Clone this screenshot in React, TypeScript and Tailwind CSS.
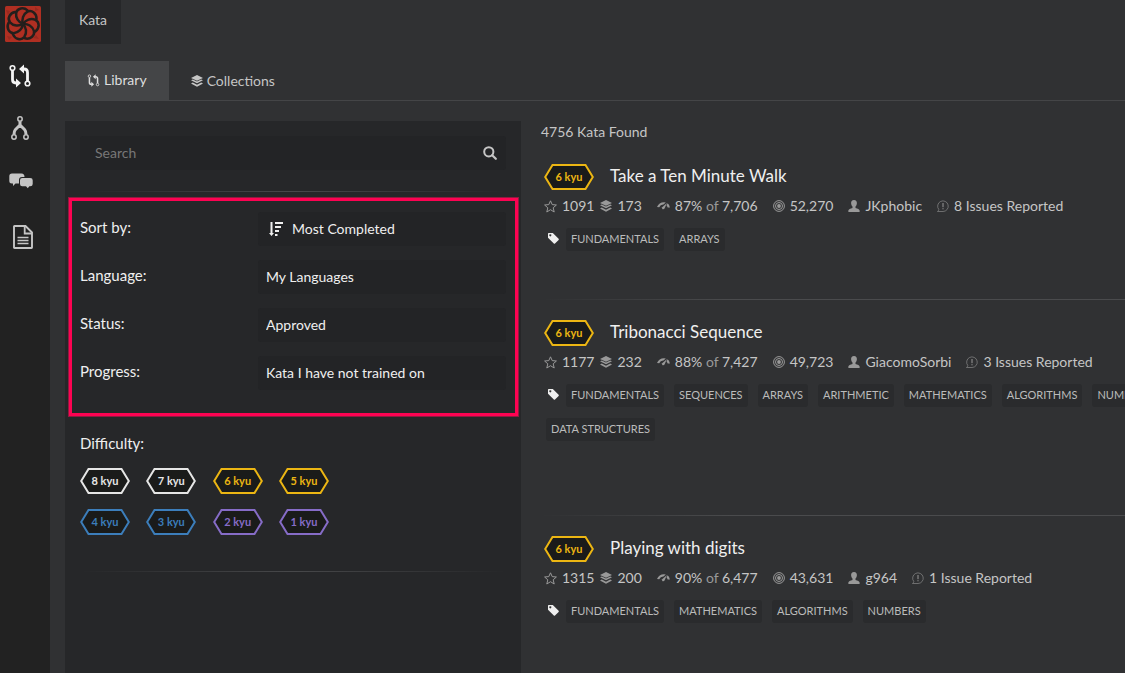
import type { ReactNode } from "react";

type IconProps = { className?: string };

function SpiralLogo() {
  const turn = 360 / 7;
  return (
    <svg viewBox="0 0 36 36" className="h-9 w-9" aria-hidden="true">
      <rect width="36" height="36" rx="1.500" fill="#b02f22" />
      <path d="M1 4l4 1-2 4zM30 1l4 3-4 1zM2 30l5 1-3 3zM31 29l3 4-6-1z" fill="#982a20" />
      <g fill="none" stroke="#241f1c" strokeWidth="2.500" strokeLinecap="round">
        {[0, 1, 2, 3, 4, 5, 6].map((n) => (
          <path
            key={n}
            d="M18 18C16.500 13.500 18 8.200 22.500 5.700C26.800 3.700 31.800 7.500 31.500 13"
            transform={`rotate(${n * turn} 18 18)`}
          />
        ))}
      </g>
    </svg>
  );
}

function TrainIcon({ className }: IconProps) {
  return (
    <svg viewBox="0 0 22 24" className={className} fill="none" stroke="currentColor" aria-hidden="true">
      <circle cx="3.500" cy="4" r="2.300" strokeWidth="1.600" />
      <circle cx="18.500" cy="19.500" r="2.300" strokeWidth="1.600" />
      <path d="M3.500 6.500V15.500Q3.500 19 7 19H8M18.500 17V8.500Q18.500 5 15 5H14" strokeWidth="2.800" />
      <path d="M7 14.500L12 19L7 23.500ZM15 0.500L10 5L15 9.500Z" fill="currentColor" stroke="none" />
    </svg>
  );
}

function ForkIcon({ className }: IconProps) {
  return (
    <svg viewBox="0 0 18 24" className={className} fill="none" stroke="currentColor" aria-hidden="true">
      <path d="M9 5.500V9.500M9 9L4.300 13.800Q3.200 15 3 18.500M9 9L13.700 13.800Q14.800 15 15 18.500" strokeWidth="3" />
      <circle cx="9" cy="3" r="2.200" strokeWidth="1.500" />
      <circle cx="3" cy="21" r="2.200" strokeWidth="1.500" />
      <circle cx="15" cy="21" r="2.200" strokeWidth="1.500" />
    </svg>
  );
}

function ChatIcon({ className }: IconProps) {
  return (
    <svg viewBox="0 0 24 16" className={className} fill="currentColor" aria-hidden="true">
      <path d="M3 0.500H12.500Q15.500 0.500 15.500 4H13Q10 4 10 7V10.500H6.500L4 13V10.500H3Q0.300 10.500 0.300 8V3.300Q0.300 0.500 3 0.500Z" />
      <path d="M13.200 5H21.200Q23.700 5 23.700 7.200V11Q23.700 13.300 21.200 13.300H20.300L18.800 15.300L17 13.300H13.200Q11 13.300 11 11V7.200Q11 5 13.200 5Z" />
    </svg>
  );
}

function DocIcon({ className }: IconProps) {
  return (
    <svg viewBox="0 0 20 24" className={className} fill="none" stroke="currentColor" aria-hidden="true">
      <path d="M1 1.500Q1 1 1.500 1H12.500L19 7.500V22.500Q19 23 18.500 23H1.500Q1 23 1 22.500Z" strokeWidth="1.900" />
      <path d="M11.700 1V8.500H19" strokeWidth="1.800" />
      <path d="M4.500 12.500H15.500M4.500 15.500H15.500M4.500 18.500H15.500" strokeWidth="1.300" />
    </svg>
  );
}

function LayersIcon({ className }: IconProps) {
  return (
    <svg viewBox="0 0 12 12" className={className} fill="currentColor" aria-hidden="true">
      <path d="M6 0L12 2.900L6 5.800L0 2.900Z" />
      <path d="M0 5.200L1.800 4.400L6 6.500L10.200 4.400L12 5.200L6 8.300Z" />
      <path d="M0 8.400L1.800 7.500L6 9.700L10.200 7.500L12 8.400L6 11.700Z" />
    </svg>
  );
}

function StarIcon({ className }: IconProps) {
  return (
    <svg viewBox="0 0 13 13" className={className} fill="none" stroke="currentColor" aria-hidden="true">
      <path d="M6.500 0.800L8.200 4.600L12.400 5L9.200 7.800L10.200 12L6.500 9.700L2.800 12L3.800 7.800L0.600 5L4.800 4.600Z" strokeLinejoin="round" />
    </svg>
  );
}

function GaugeIcon({ className }: IconProps) {
  return (
    <svg viewBox="0 0 13 12" className={className} fill="currentColor" aria-hidden="true">
      <path d="M0 7Q2 2.200 7 2.200Q8 2.200 8.800 2.500L6.500 4.400Q3.500 4.200 2.200 7.300Z" />
      <path d="M10 3L5.200 7.200Q4.600 8.400 5.600 9.200Q6.900 9.600 7.500 8.500Z" />
      <path d="M10.600 3.300Q12.400 4.700 12.900 7.400L10.700 7.600Q10.400 6.300 9.500 5.500Z" />
    </svg>
  );
}

function TargetIcon({ className }: IconProps) {
  return (
    <svg viewBox="0 0 12 12" className={className} fill="none" stroke="currentColor" aria-hidden="true">
      <circle cx="6" cy="6" r="5.400" strokeWidth="1" />
      <circle cx="6" cy="6" r="3.500" strokeWidth="1" />
      <circle cx="6" cy="6" r="1.900" fill="currentColor" stroke="none" />
    </svg>
  );
}

function PersonIcon({ className }: IconProps) {
  return (
    <svg viewBox="0 0 12 12" className={className} fill="currentColor" aria-hidden="true">
      <path d="M6 0C8.100 0 9 1.400 8.900 3.200C8.800 4.800 8.200 5.800 7.500 6.600V7.900C9.500 8.600 11.800 9 11.800 11.200Q11.800 12 11 12H1Q0.200 12 0.200 11.200C0.200 9 2.500 8.600 4.500 7.900V6.600C3.800 5.800 3.200 4.800 3.100 3.200C3 1.400 3.900 0 6 0Z" />
    </svg>
  );
}

function IssueIcon({ className }: IconProps) {
  return (
    <svg viewBox="0 0 12 12" className={className} fill="none" stroke="currentColor" aria-hidden="true">
      <path d="M0.500 11.500H6A5.300 5.300 0 1 0 1.800 9.500Q1.500 10.900 0.500 11.500Z" strokeWidth="0.600" />
      <path d="M6 3V7.200M6 8.200V9.300" strokeWidth="1" />
    </svg>
  );
}

function TagIcon({ className }: IconProps) {
  return (
    <svg viewBox="0 0 11 11" className={className} aria-hidden="true">
      <path fillRule="evenodd" fill="currentColor" d="M0.700 0H4.800L10.600 5.700Q11.100 6.300 10.600 6.900L7 10.600Q6.400 11 5.800 10.500L0 4.800V0.700Q0 0 0.700 0ZM2.300 1.300A1 1 0 1 0 2.310 1.300Z" />
    </svg>
  );
}

function SearchIcon({ className }: IconProps) {
  return (
    <svg viewBox="0 0 14 14" className={className} fill="none" stroke="currentColor" aria-hidden="true">
      <circle cx="5.800" cy="5.800" r="4.600" strokeWidth="2" />
      <path d="M9.200 9.200L12.800 12.800" strokeWidth="2.200" strokeLinecap="round" />
    </svg>
  );
}

function SortIcon({ className }: IconProps) {
  return (
    <svg viewBox="0 0 14 14" className={className} fill="currentColor" aria-hidden="true">
      <path d="M1.500 0H3.500V11H5L2.500 14L0 11H1.500Z" />
      <path d="M6 0H14V2H6ZM6 4H12V6H6ZM6 8H10V10H6ZM6 12H8.500V14H6Z" />
    </svg>
  );
}

function RankBadge({ rank, className }: { rank: number; className: string }) {
  return (
    <span className={`relative flex h-[26px] w-[50px] shrink-0 items-center justify-center ${className}`}>
      <svg viewBox="0 0 50 26" className="absolute inset-0 h-full w-full" aria-hidden="true">
        <path d="M1.200 13L8.500 1H41.500L48.800 13L41.500 25H8.500Z" fill="#1a1b1a" stroke="currentColor" strokeWidth="2" />
      </svg>
      <span className="relative text-[11px] leading-4 font-bold">{rank} kyu</span>
    </span>
  );
}

const ranks = [
  { rank: 8, color: "text-[#e6e6e6]" },
  { rank: 7, color: "text-[#e6e6e6]" },
  { rank: 6, color: "text-[#ecb613]" },
  { rank: 5, color: "text-[#ecb613]" },
  { rank: 4, color: "text-[#3c7ebb]" },
  { rank: 3, color: "text-[#3c7ebb]" },
  { rank: 2, color: "text-[#866cc7]" },
  { rank: 1, color: "text-[#866cc7]" },
];

const filters = [
  { id: "sort", label: "Sort by:", value: "Most Completed" },
  { id: "language", label: "Language:", value: "My Languages" },
  { id: "status", label: "Status:", value: "Approved" },
  { id: "progress", label: "Progress:", value: "Kata I have not trained on" },
];

const katas = [
  {
    title: "Take a Ten Minute Walk", stars: "1091", collections: "173", percent: "87%", votes: "7,706",
    completed: "52,270", author: "JKphobic", issues: "8 Issues Reported",
    tags: ["Fundamentals", "Arrays"], space: "pb-12",
  },
  {
    title: "Tribonacci Sequence", stars: "1177", collections: "232", percent: "88%", votes: "7,427",
    completed: "49,723", author: "GiacomoSorbi", issues: "3 Issues Reported",
    tags: ["Fundamentals", "Sequences", "Arrays", "Arithmetic", "Mathematics", "Algorithms", "Numbers", "Data Structures"],
    space: "pb-[74px]",
  },
  {
    title: "Playing with digits", stars: "1315", collections: "200", percent: "90%", votes: "6,477",
    completed: "43,631", author: "g964", issues: "1 Issue Reported",
    tags: ["Fundamentals", "Mathematics", "Algorithms", "Numbers"], space: "pb-12",
  },
];

function Divider() {
  return <div className="mb-5 h-px bg-linear-to-r from-transparent via-[#4a4b4d] via-30% to-[#4a4b4d]" />;
}

function PanelDivider() {
  return <div className="h-px bg-linear-to-r from-transparent via-[#47484a] to-transparent" />;
}

function Stat({ icon, children }: { icon: ReactNode; children: ReactNode }) {
  return (
    <span className="flex shrink-0 items-center gap-[5px] whitespace-nowrap">
      <span className="text-[#999]">{icon}</span>
      <span>{children}</span>
    </span>
  );
}

function KataItem({ kata }: { kata: (typeof katas)[number] }) {
  return (
    <article className={kata.space}>
      <div className="flex items-center gap-4 pl-[3px]">
        <RankBadge rank={6} className="text-[#ecb613]" />
        <a href="#kata" className="pb-0.5 text-[17px] leading-6 text-[#efefef]">{kata.title}</a>
      </div>
      <div className="mt-1.5 flex h-5 items-center gap-[15px] pl-[3px] text-sm">
        <span className="flex gap-1.5">
          <Stat icon={<StarIcon className="h-[13px] w-[13px]" />}>{kata.stars}</Stat>
          <Stat icon={<LayersIcon className="h-3 w-3" />}>{kata.collections}</Stat>
        </span>
        <Stat icon={<GaugeIcon className="h-3 w-[13px]" />}>
          {kata.percent} <span className="text-[#999]">of</span> {kata.votes}
        </Stat>
        <Stat icon={<TargetIcon className="h-3 w-3" />}>{kata.completed}</Stat>
        <Stat icon={<PersonIcon className="h-3 w-3" />}>
          <a href="#author">{kata.author}</a>
        </Stat>
        <Stat icon={<IssueIcon className="h-3 w-3" />}>{kata.issues}</Stat>
      </div>
      <div className="mt-3 flex flex-wrap items-center gap-x-2.5 gap-y-[11px] pl-[5px]">
        {kata.tags.map((tag, i) => (
          <span key={tag} className="flex items-center gap-[7px]">
            {i === 0 && <TagIcon className="mb-0.5 ml-0.5 h-[11px] w-[11px] text-[#efefef]" />}
            <span className="rounded-[3px] bg-[#2a2b2d] px-[5px] pb-px text-[11px] leading-[22px] whitespace-nowrap uppercase text-[#bbb]">
              {tag}
            </span>
          </span>
        ))}
      </div>
    </article>
  );
}

export default function App() {
  return (
    <div className="flex min-h-screen overflow-x-hidden bg-[#303133] font-['Lato',sans-serif] text-sm text-[#c5c5c5]">
      <nav aria-label="Main" className="flex w-[50px] shrink-0 flex-col bg-[#222] pt-1.5 pl-[5px]">
        <a href="#home" aria-label="Home"><SpiralLogo /></a>
        <a href="#train" aria-label="Train" className="mt-[22px] pl-1 text-[#f4f4f4]"><TrainIcon className="h-6 w-[22px]" /></a>
        <a href="#fork" aria-label="Practice" className="mt-7 pl-1.5"><ForkIcon className="h-6 w-[18px]" /></a>
        <a href="#chat" aria-label="Discuss" className="mt-[33px] pl-1"><ChatIcon className="h-4 w-6" /></a>
        <a href="#docs" aria-label="Docs" className="mt-9 pl-2"><DocIcon className="h-6 w-5" /></a>
      </nav>

      <main className="flex min-w-0 flex-1 flex-col pl-[15px]">
        <header className="flex">
          <h1 className="bg-[#262729] px-3.5 pt-2.5 pb-3.5 leading-5">Kata</h1>
        </header>

        <div className="mt-[17px] flex h-10 border-b border-[#444547]">
          <a href="#library" className="-mb-px flex items-center gap-1 bg-[#444547] px-[22px] pb-0.5 text-[#dedede]">
            <TrainIcon className="h-[13px] w-[13px]" />
            Library
          </a>
          <a href="#collections" className="flex items-center gap-1 px-[22px]">
            <LayersIcon className="h-3 w-3" />
            Collections
          </a>
        </div>

        <div className="mt-5 flex flex-1">
          <section aria-label="Filters" className="w-[456px] shrink-0 bg-[#262729] p-[15px]">
            <div className="flex h-[34px] items-center rounded-[3px] bg-[#232426] pr-[9px] pl-[15px]">
              <input
                type="text"
                aria-label="Search"
                placeholder="Search"
                className="min-w-0 flex-1 bg-transparent outline-none placeholder:text-[#777]"
              />
              <button type="button" aria-label="Run search"><SearchIcon className="h-[14px] w-[14px]" /></button>
            </div>
            <div className="mt-[21px]"><PanelDivider /></div>

            <div className="relative mt-5 flex flex-col gap-3.5 text-[#efefef]">
              {filters.map((f, i) => (
                <div key={f.id} className="flex">
                  <label htmlFor={f.id} className="w-[178px] text-[15px] leading-[30px]">{f.label}</label>
                  <div className="relative flex-1">
                    {i === 0 && <SortIcon className="pointer-events-none absolute top-2.5 left-[11px] h-[14px] w-[14px]" />}
                    <select
                      id={f.id}
                      className={`h-[34px] w-full appearance-none rounded-[3px] bg-[#232426] pr-2 ${i === 0 ? "pl-[34px]" : "pl-2"}`}
                    >
                      <option>{f.value}</option>
                    </select>
                  </div>
                </div>
              ))}
              <div className="pointer-events-none absolute -top-3.5 -right-3 -bottom-[26px] -left-[11px] border-[3px] border-[#fd0352] ring-1 ring-[#8f1a40]" />
            </div>

            <h2 className="mt-[43px] text-[15px] leading-5 text-[#efefef]">Difficulty:</h2>
            <div className="mt-[15px] grid w-[249px] grid-cols-[repeat(4,50px)] justify-between gap-y-[15px]">
              {ranks.map((r) => (
                <button key={r.rank} type="button"><RankBadge rank={r.rank} className={r.color} /></button>
              ))}
            </div>
            <div className="mt-9"><PanelDivider /></div>
          </section>

          <section aria-label="Results" className="min-w-[660px] flex-1 pl-5">
            <p className="leading-[22px]">4756 Kata Found</p>
            <div className="mt-[21px]">
              {katas.map((kata, i) => (
                <div key={kata.title}>
                  {i > 0 && <Divider />}
                  <KataItem kata={kata} />
                </div>
              ))}
            </div>
          </section>
        </div>
      </main>
    </div>
  );
}
